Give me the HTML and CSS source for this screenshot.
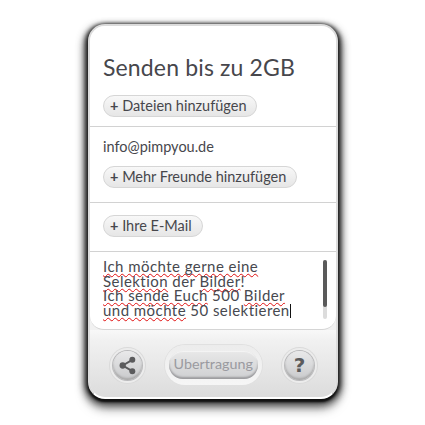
FILE: index.html
```html
<!DOCTYPE html>
<html lang="de">
<head>
<meta charset="utf-8">
<title>Senden bis zu 2GB</title>
<link rel="stylesheet" href="styles.css">
</head>
<body>
<main class="card">
  <section class="sec sec-head">
    <h1 class="title">Senden bis zu 2GB</h1>
    <button class="pill"><b class="plus">+</b> Dateien hinzufügen</button>
  </section>
  <section class="sec sec-friends">
    <div class="mail">info@pimpyou.de</div>
    <button class="pill"><b class="plus">+</b> Mehr Freunde hinzufügen</button>
  </section>
  <section class="sec sec-own">
    <button class="pill"><b class="plus">+</b> Ihre E-Mail</button>
  </section>
  <section class="message">
    <div class="msg-text">
      <div><span class="sp">Ich möchte gerne eine</span></div>
      <div><span class="sp">Selektion</span> der <span class="sp">Bilder</span>!</div>
      <div><span class="sp">Ich sende Euch</span> 500 <span class="sp">Bilder</span></div>
      <div><span class="sp">und möchte</span> 50 selektieren<span class="caret"></span></div>
    </div>
    <div class="track"><div class="thumb"></div></div>
  </section>
  <footer class="foot">
    <div class="round">
      <svg class="ico" width="21" height="21" viewBox="0 0 24 24"><g fill="#5b5b5d" stroke="#5b5b5d"><path d="M17.5 5.5 6.5 12l11 6.5" fill="none" stroke-width="2.2"/><circle cx="6.5" cy="12" r="3.6" stroke="none"/><circle cx="17.5" cy="5.5" r="3.4" stroke="none"/><circle cx="17.5" cy="18.5" r="3.4" stroke="none"/></g></svg>
    </div>
    <div class="send-ring"><div class="send">Ubertragung</div></div>
    <div class="round"><span class="q">?</span></div>
  </footer>
</main>
</body>
</html>
```
FILE: styles.css
```css
html, body { margin: 0; padding: 0; background: #fff; }
body { width: 425px; height: 425px; overflow: hidden; font-family: "Lato", "Open Sans", sans-serif; color: #47474c; }
.card {
  box-sizing: border-box;
  width: 250px;
  height: 375px;
  margin: 24px 0 0 88px;
  border: 2px solid #dcdcdc;
  border-bottom-color: #fff;
  border-radius: 17px;
  background: #f1f1f1;
  box-shadow: 0 3px 2px #111, -2px 1px 4px #2a2a2a, 2px 1px 4px #2a2a2a, -3px 3px 8px #555, 3px 3px 8px #555, 0 8px 12px rgba(0,0,0,.6);
  display: flex;
  flex-direction: column;
  overflow: hidden;
}
.sec { padding: 0 13px; border-bottom: 1px solid #d2d2d2; box-sizing: border-box; background: #fff; }
.sec-head { height: 101px; padding-top: 27px; }
.sec-friends { height: 76px; padding-top: 10px; }
.sec-own { height: 49px; padding-top: 12px; }
.title { margin: 0 0 14px; font-weight: 400; font-size: 23px; line-height: 28px; letter-spacing: .15px; }
.mail { font-size: 14.5px; line-height: 20px; margin-bottom: 9px; }
.pill {
  display: block;
  height: 22px;
  padding: 0 10px 0 6px;
  border: 1px solid #d6d6d6;
  border-radius: 11px;
  background: linear-gradient(#f8f8f8, #e6e6e6);
  font: 14.5px/20px "Lato", "Open Sans", sans-serif;
  color: #47474c;
  white-space: nowrap;
}
.plus { font-weight: 700; }
.message {
  position: relative;
  height: 78px;
  box-sizing: border-box;
  padding: 7px 0 0 13px;
  border-radius: 0 0 14px 14px;
  border-bottom: 1px solid #d5d5d5;
  background: #fff;
}
.msg-text { font-size: 15px; line-height: 14.7px; letter-spacing: .45px; color: #47494f; white-space: nowrap; }
.sp { text-decoration: underline wavy #e01010 1px; text-underline-offset: 1px; text-decoration-skip-ink: none; }
.caret { display: inline-block; width: 1px; height: 14px; background: #111; vertical-align: -2px; }
.track { position: absolute; top: 8px; right: 9px; width: 4px; height: 59px; background: #dcdcdc; border-radius: 2px; }
.thumb { height: 47px; background: #5a5a5a; border-radius: 2px; }
.foot {
  flex: 1;
  background: linear-gradient(#f8f8f8 0, #f1f1f1 15%, #dcdcdc 100%);
  display: flex;
  align-items: center;
  padding: 3px 22px 0 22.5px;
  justify-content: space-between;
}
.round {
  box-sizing: border-box;
  width: 29px;
  height: 29px;
  border-radius: 50%;
  background: linear-gradient(#e9e9ea, #c9cacc);
  box-shadow: 0 0 0 1px #b9b9bb, 0 0 0 3px #ececec, 0 0 0 4px #dadada, inset 0 -2px 2px #aaa;
  display: flex;
  align-items: center;
  justify-content: center;
}
.ico { display: block; }
.q { font: 700 20px/1 "DejaVu Sans", sans-serif; color: #5b5b5d; }
.send-ring {
  padding: 6px 4px;
  border-radius: 20px;
  background: linear-gradient(#ececec, #f6f6f6);
  box-shadow: 0 0 0 1px #e0e0e0;
}
.send {
  box-sizing: border-box;
  width: 89px;
  height: 28px;
  border-radius: 14px;
  background: linear-gradient(#e8e8e8, #cfd0d2);
  box-shadow: inset 0 -2px 2px #9b9b9e, inset 0 1px 1px #f5f5f5;
  font-size: 14.3px;
  line-height: 26px;
  text-align: center;
  color: #9a9aa0;
  white-space: nowrap;
}
```
